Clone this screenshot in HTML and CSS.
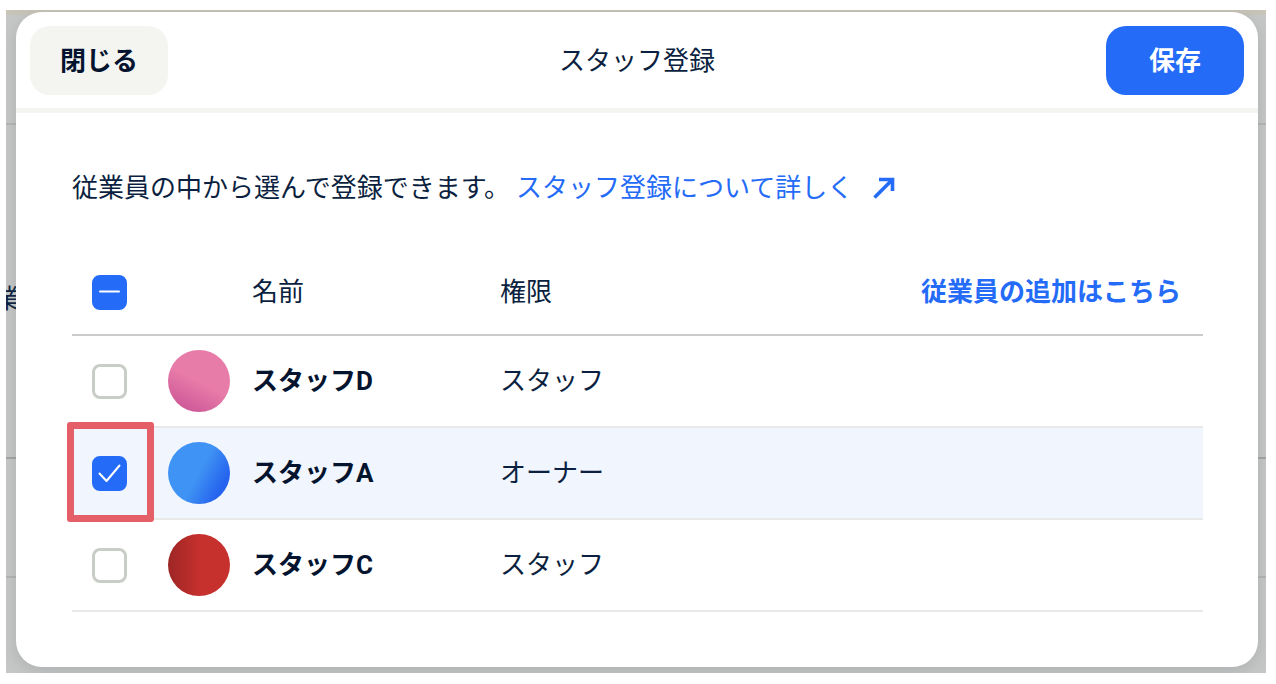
FILE: index.html
```
<!DOCTYPE html>
<html lang="ja">
  <head>
    <meta charset="UTF-8">
    <meta name="viewport" content="width=device-width, initial-scale=1.0">
    <title>スタッフ登録</title>
    <link rel="stylesheet" href="styles.css">
  </head>
  <body>
    <div class="screen">
      <div class="backdrop" aria-hidden="true">
        <div class="backdrop_bar"></div>
        <div class="backdrop_top"></div>
        <div class="backdrop_middle"><span class="backdrop_text">業</span></div>
        <div class="backdrop_row"></div>
      </div>

      <main class="modal">
        <header class="modal_header">
          <button type="button" class="button button_close">閉じる</button>
          <h1 class="modal_title">スタッフ登録</h1>
          <button type="button" class="button button_save">保存</button>
        </header>

        <div class="modal_body">
          <p class="lead">
            従業員の中から選んで登録できます。<a href="#" class="lead_link">スタッフ登録について詳しく<svg class="lead_icon" viewBox="0 0 22 22" aria-hidden="true"><path d="M1.5 20.5 L19 3 M6 2.5 H19.5 V14"/></svg></a>
          </p>

          <table class="staff">
            <colgroup>
              <col class="col_check">
              <col class="col_avatar">
              <col class="col_name">
              <col>
            </colgroup>
            <thead>
              <tr>
                <th>
                  <label class="check">
                    <input type="checkbox" class="check_input check_partial" aria-label="すべて選択">
                    <svg class="check_mark" viewBox="0 0 35 35" aria-hidden="true"><path d="M8 16.5 H27"/></svg>
                  </label>
                </th>
                <th></th>
                <th>名前</th>
                <th>
                  <div class="staff_last">
                    <span>権限</span>
                    <a href="#" class="add_link">従業員の追加はこちら</a>
                  </div>
                </th>
              </tr>
            </thead>
            <tbody>
              <tr>
                <td>
                  <label class="check"><input type="checkbox" class="check_input" aria-label="スタッフD"></label>
                </td>
                <td><div class="avatar avatar_pink"></div></td>
                <td class="staff_name">スタッフD</td>
                <td>スタッフ</td>
              </tr>
              <tr class="selected">
                <td class="highlight">
                  <label class="check">
                    <input type="checkbox" class="check_input" aria-label="スタッフA" checked>
                    <svg class="check_mark" viewBox="0 0 35 35" aria-hidden="true"><path d="M7.5 17.5 L14.5 25 L27.5 9.5"/></svg>
                  </label>
                </td>
                <td><div class="avatar avatar_blue"></div></td>
                <td class="staff_name">スタッフA</td>
                <td>オーナー</td>
              </tr>
              <tr>
                <td>
                  <label class="check"><input type="checkbox" class="check_input" aria-label="スタッフC"></label>
                </td>
                <td><div class="avatar avatar_red"></div></td>
                <td class="staff_name">スタッフC</td>
                <td>スタッフ</td>
              </tr>
            </tbody>
          </table>
        </div>
      </main>
    </div>
  </body>
</html>
```
FILE: styles.css
```
*,
*::after {
  box-sizing: border-box;
}
body {
  margin: 0;
  background-color: #fff;
  color: #0b1f40;
  font-family: Roboto, "Noto Sans CJK JP", sans-serif;
  font-size: 26px;
  line-height: 38px;
}
a {
  color: #246bf8;
  text-decoration: none;
}

/* dimmed page behind the modal */
.screen {
  position: relative;
  margin: 10px 10px 0 6px;
  padding: 2px 8px 6px 10px;
  overflow: hidden;
}
.backdrop {
  position: absolute;
  inset: 0;
  display: flex;
  flex-direction: column;
  background-color: #c6c8c7;
}
.backdrop_bar {
  height: 5px;
  background-color: #c8c4b8;
}
.backdrop_top {
  height: 110px;
  border-bottom: 2px solid #b4b5b5;
}
.backdrop_middle {
  display: flex;
  align-items: center;
  height: 334px;
  padding-top: 16px;
  border-bottom: 2px solid #a3a5a5;
}
.backdrop_text {
  margin-left: -12px;
}
.backdrop_row {
  height: 119px;
  border-bottom: 2px solid #b2b4b4;
}

.modal {
  position: relative;
  background-color: #fff;
  border-radius: 26px;
  box-shadow: 0 4px 16px rgba(100, 104, 110, 0.25);
}
.modal_header {
  display: grid;
  grid-template-columns: 1fr auto 1fr;
  align-items: center;
  padding: 14px 14px 13px;
  border-bottom: 5px solid #f4f5f1;
}
.modal_title {
  margin: 0;
  font-size: 26px;
  font-weight: 400;
}
.button {
  width: 138px;
  height: 69px;
  padding: 0;
  border: 0;
  border-radius: 20px;
  font: inherit;
  font-weight: 700;
}
.button_close {
  background-color: #f4f5f1;
  color: #04142f;
}
.button_save {
  justify-self: end;
  background-color: #246bf8;
  color: #fff;
}
.modal_body {
  padding: 56px 55px 55px 56px;
}

.lead {
  margin: 0 0 43px;
}
.lead_link {
  margin-left: 6px;
}
.lead_icon {
  width: 22px;
  height: 22px;
  margin-left: 20px;
  vertical-align: -2px;
  fill: none;
  stroke: #246bf8;
  stroke-width: 3.6;
}

.staff {
  width: 100%;
  table-layout: fixed;
  border-spacing: 0;
}
.col_check {
  width: 96px;
}
.col_avatar {
  width: 84px;
}
.col_name {
  width: 248px;
}
.staff th,
.staff td {
  padding: 0;
  text-align: left;
  vertical-align: middle;
}
.staff th {
  height: 86px;
  border-bottom: 2px solid #c9ccc8;
  font-weight: 400;
}
.staff td {
  height: 92px;
  border-bottom: 2px solid #e9eae7;
}
.staff .staff_name {
  color: #04142f;
  font-weight: 700;
}
.staff_last {
  display: flex;
  justify-content: space-between;
  padding-right: 22px;
}
.add_link {
  font-weight: 700;
}
.selected {
  background-color: #f1f6fe;
}

.check {
  position: relative;
  display: block;
  width: 35px;
  height: 35px;
  margin-left: 20px;
}
.check_input {
  appearance: none;
  display: block;
  width: 35px;
  height: 35px;
  margin: 0;
  border: 3px solid #c9cdc7;
  border-radius: 8px;
  background-color: #fff;
}
.check_input:checked,
.check_partial {
  border-color: #246bf8;
  background-color: #246bf8;
}
.check_mark {
  position: absolute;
  inset: 0;
  fill: none;
  stroke: #fff;
  stroke-width: 2;
  stroke-linecap: round;
  stroke-linejoin: round;
  pointer-events: none;
}

/* red frame around the checked box */
.highlight {
  position: relative;
}
.highlight::after {
  content: "";
  position: absolute;
  top: -6px;
  left: -5px;
  width: 87px;
  height: 100px;
  border: 7px solid #e55f68;
  border-radius: 3px;
  pointer-events: none;
}

.avatar {
  width: 62px;
  height: 62px;
  border-radius: 50%;
}
.avatar_pink {
  background: linear-gradient(207deg, #e87ca9 50%, #cb5596 92%);
}
.avatar_blue {
  background: linear-gradient(118deg, #3f93f4 50%, #2563ee 82%);
}
.avatar_red {
  background: linear-gradient(90deg, #9c2625, #c6302d 50%);
}
```
